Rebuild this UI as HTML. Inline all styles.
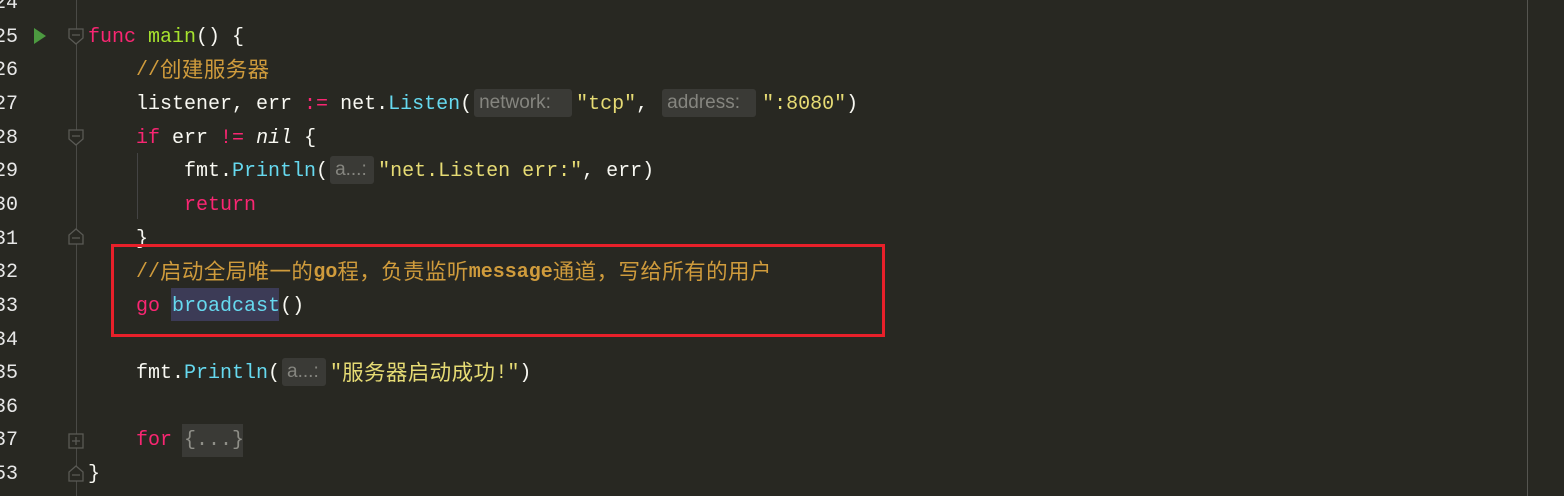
<!DOCTYPE html>
<html><head><meta charset="utf-8"><style>
body{margin:0;width:1564px;height:496px;background:#282822;overflow:hidden;position:relative;font-family:"Liberation Mono","Noto Sans CJK SC",monospace;font-size:20px;color:#f8f8f2}
.l{position:absolute;left:0;height:34px;line-height:34px;white-space:pre}
.n{position:absolute;left:-30px;width:48px;text-align:right;color:#e8e8e8;font-size:20px}
.c{position:absolute;left:88px}
.k{color:#f92672}.f{color:#a6e22e}.cm{color:#cf9b3c}.s{color:#e6db74}.b{color:#66d9ef}
.z{font-family:"Noto Sans CJK SC",sans-serif;font-size:21.5px;line-height:1;letter-spacing:0.4px;vertical-align:-2px}
.h{display:inline-block;background:#3a3a36;color:#85857f;font-family:"Liberation Sans",sans-serif;font-size:19px;border-radius:3px;height:28px;line-height:28px;vertical-align:1px;text-align:left;padding-left:5px;box-sizing:border-box}
</style></head><body>
<div style="position:absolute;left:1527px;top:0;width:1px;height:496px;background:#555550"></div>
<div style="position:absolute;left:76px;top:0;width:1px;height:496px;background:#4a4a46"></div>
<div style="position:absolute;left:137px;top:153px;width:1px;height:66px;background:#444"></div>
<svg style="position:absolute;left:0;top:0" width="100" height="496">
<polygon points="34,28 46,36 34,44" fill="#4c9a40"/>
<g fill="#282822" stroke="#5a5a55" stroke-width="1.3">
<path d="M69,29 h14 v9 l-7,6 l-7,-6z"/><path d="M72,35 h8"/>
<path d="M69,130 h14 v9 l-7,6 l-7,-6z"/><path d="M72,136 h8"/>
<path d="M69,244 h14 v-9 l-7,-6 l-7,6z"/><path d="M72,238 h8"/>
<rect x="69" y="434" width="14" height="14"/><path d="M72,441 h8 M76,437 v8"/>
<path d="M69,481 h14 v-9 l-7,-6 l-7,6z"/><path d="M72,475 h8"/>
</g></svg>
<div style="position:absolute;left:171px;top:288px;width:108px;height:33px;background:#3c3b56"></div>
<div class="l" style="top:-13px"><span class="n">24</span></div>
<div class="l" style="top:21px"><span class="n">25</span><span class="c"><span class="k">func</span> <span class="f">main</span>() {</span></div>
<div class="l" style="top:54px"><span class="n">26</span><span class="c">    <span class="cm">//<span class="z">创建服务器</span></span></span></div>
<div class="l" style="top:88px"><span class="n">27</span><span class="c">    listener, err <span class="k">:=</span> net.<span class="b">Listen</span>(<span class="h" style="width:98px;margin-left:2px;margin-right:4px">network:</span><span class="s">"tcp"</span>, <span class="h" style="width:94px;margin-left:2px;margin-right:6px">address:</span><span class="s">":8080"</span>)</span></div>
<div class="l" style="top:122px"><span class="n">28</span><span class="c">    <span class="k">if</span> err <span class="k">!=</span> <i>nil</i> {</span></div>
<div class="l" style="top:155px"><span class="n">29</span><span class="c">        fmt.<span class="b">Println</span>(<span class="h" style="width:44px;margin-left:2px;margin-right:4px">a...:</span><span class="s">"net.Listen err:"</span>, err)</span></div>
<div class="l" style="top:189px"><span class="n">30</span><span class="c">        <span class="k">return</span></span></div>
<div class="l" style="top:223px"><span class="n">31</span><span class="c">    }</span></div>
<div class="l" style="top:256px"><span class="n">32</span><span class="c">    <span class="cm">//<span class="z">启动全局唯一的</span><b>go</b><span class="z">程，负责监听</span><b>message</b><span class="z">通道，写给所有的用户</span></span></span></div>
<div class="l" style="top:290px"><span class="n">33</span><span class="c">    <span class="k">go</span> <span class="b">broadcast</span>()</span></div>
<div class="l" style="top:324px"><span class="n">34</span></div>
<div class="l" style="top:357px"><span class="n">35</span><span class="c">    fmt.<span class="b">Println</span>(<span class="h" style="width:44px;margin-left:2px;margin-right:4px">a...:</span><span class="s">"<span class="z">服务器启动成功</span>!"</span>)</span></div>
<div class="l" style="top:391px"><span class="n">36</span></div>
<div class="l" style="top:424px"><span class="n">37</span><span class="c">    <span class="k">for</span> <span style="background:#3a3a36;color:#8f8f88;display:inline-block;height:33px;line-height:33px;width:61px;margin-left:-2px;padding-left:2px;box-sizing:border-box;vertical-align:top">{...}</span></span></div>
<div class="l" style="top:458px"><span class="n">53</span><span class="c">}</span></div>
<div style="position:absolute;left:111px;top:244px;width:768px;height:87px;border:3px solid #e8202a"></div>
</body></html>
